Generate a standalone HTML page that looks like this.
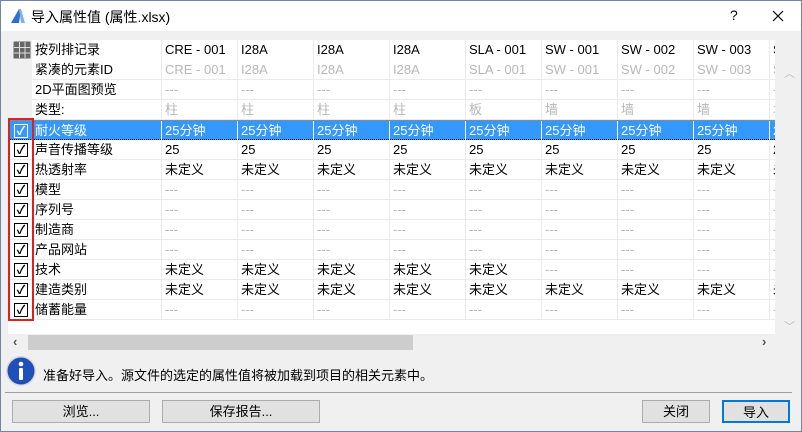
<!DOCTYPE html>
<html><head><meta charset="utf-8"><style>
*{margin:0;padding:0;box-sizing:border-box}
body{width:802px;height:432px;overflow:hidden;background:#f0f0f0;font-family:"Liberation Sans","Noto Sans CJK SC",sans-serif;font-size:13px;color:#000;position:relative}
.win{position:absolute;left:0;top:0;width:802px;height:432px;border:1px solid #6f86a6;}
.title{position:absolute;left:1px;top:1px;width:800px;height:30px;background:#fff}
.abs{position:absolute}
.tbl{position:absolute;left:8px;top:40px;width:767px;height:294px;background:#fff;overflow:hidden}
.row{position:absolute;left:0;width:767px;height:20px;border-bottom:1px solid #ebebeb}
.c{position:absolute;top:0;height:20px;line-height:19px;white-space:nowrap;overflow:hidden;padding-left:3px;border-left:1px solid #ebebeb}
.g{color:#b8b8b8}
.sel{background:#3399ff;color:#fff;border-bottom:1px dotted #000;border-top:1px dotted #c08040}
.sel .c{border-left:1px solid #fff}
.cb{position:absolute;left:6px;top:3px;width:14px;height:14px;border:1px solid #000;background:#fff;font-size:12px;line-height:12px;text-align:center;font-weight:bold}
.sel .cb{background:transparent;border-color:#fff;color:#fff}
.btn{position:absolute;top:400px;height:23px;background:#e1e1e1;border:1px solid #adadad;text-align:center;line-height:21px;font-size:13px}
</style></head><body>
<div class="win"></div>
<div class="title">
 <svg class="abs" style="left:9px;top:7px" width="16" height="16" viewBox="0 0 16 16"><path d="M1 15 L9 1 L11 1 L9 15Z" fill="#2b6fcf"/><path d="M9 1 L11 1 Q13 8 15 15 L11 15 Z" fill="#7fb0ea"/></svg>
 <div class="abs" style="left:30px;top:6px;font-size:14px">导入属性值 (属性.xlsx)</div>
 <div class="abs" style="left:729px;top:6px;font-size:14px">?</div>
 <svg class="abs" style="left:771px;top:9px" width="12" height="12"><path d="M1 1L11 11M11 1L1 11" stroke="#000" stroke-width="1.2"/></svg>
</div>
<div class="tbl" id="t"></div>
<div class="abs" style="left:8px;top:118px;width:26px;height:203px;border:2px solid #e0201c;z-index:5"></div>
<div class="abs" style="left:784px;top:65px;color:#bbb;font-size:11px">︿</div>
<div class="abs" style="left:784px;top:318px;color:#bbb;font-size:11px">﹀</div>
<div class="abs" style="left:28px;top:335px;width:385px;height:15px;background:#cdcdcd"></div>
<div class="abs" style="left:13px;top:334px;font-size:13px;color:#555;font-weight:bold">‹</div>
<div class="abs" style="left:762px;top:334px;font-size:13px;color:#555;font-weight:bold">›</div>
<svg class="abs" style="left:5px;top:355px" width="32" height="32" viewBox="0 0 32 32"><circle cx="16" cy="16" r="15" fill="#d9d9d9"/><circle cx="16" cy="16" r="13.5" fill="#1f4fb8"/><circle cx="16" cy="9" r="2.3" fill="#fff"/><rect x="14" y="13" width="4" height="12" rx="1" fill="#fff"/></svg>
<div class="abs" style="left:43px;top:365px">准备好导入。源文件的选定的属性值将被加载到项目的相关元素中。</div>
<div class="abs" style="left:5px;top:392px;width:787px;height:1px;background:#a0a0a0"></div>
<div class="btn" style="left:12px;width:138px">浏览...</div>
<div class="btn" style="left:162px;width:158px">保存报告...</div>
<div class="btn" style="left:642px;width:68px">关闭</div>
<div class="btn" style="left:722px;width:68px;border:2px solid #0078d7">导入</div>
<script>
var cols=[153,229,305,381,457,533,609,685,761];
var ids=["CRE - 001","I28A","I28A","I28A","SLA - 001","SW - 001","SW - 002","SW - 003","SW"];
var typ=["柱","柱","柱","柱","板","墙","墙","墙","墙"];
var rows=[
["按列排记录",ids,0,0],["紧凑的元素ID",ids,1,0],["2D平面图预览","-",1,0],["类型:",typ,1,0],
["耐火等级","25分钟",0,1],["声音传播等级","25",0,1],["热透射率","未定义",0,1],["模型","-",1,1],["序列号","-",1,1],["制造商","-",1,1],["产品网站","-",1,1],
["技术",["未定义","未定义","未定义","未定义","未定义","---","---","---","-"],0,1],["建造类别","未定义",0,1],["储蓄能量","-",1,1]];
var h="";
rows.forEach(function(r,i){
 var y=i*20, sel=i==4;
 var bb=(i==0)?"border-bottom:none;":"";
 h+='<div class="row'+(sel?' sel':'')+'" style="top:'+y+'px;'+bb+'">';
 if(i<4){h+='<div class="abs" style="left:0;top:0;width:24px;height:20px;background:#f0f0f0"></div>';}
 if(i==0){h+='<svg class="abs" style="left:5px;top:1px" width="18" height="18"><rect x="0.5" y="0.5" width="17" height="17" fill="#666"/><path d="M6.5 1V17M12 1V17M1 6.5H17M1 12H17" stroke="#ddd"/></svg>';}
 if(r[3]){h+='<div class="cb">✓</div>';}
 h+='<div class="c" style="left:24px;width:129px;border-left:none;">'+r[0]+'</div>';
 cols.forEach(function(x,k){
  var v=Array.isArray(r[1])?r[1][k]:r[1]; if(v=="-")v="---";
  var g=(r[2]||v=="---")&&!sel;
  h+='<div class="c'+(g?' g':'')+'" style="left:'+x+'px;width:76px">'+v+'</div>';
 });
 h+='</div>';
});
document.getElementById('t').innerHTML=h;
</script>
</body></html>
